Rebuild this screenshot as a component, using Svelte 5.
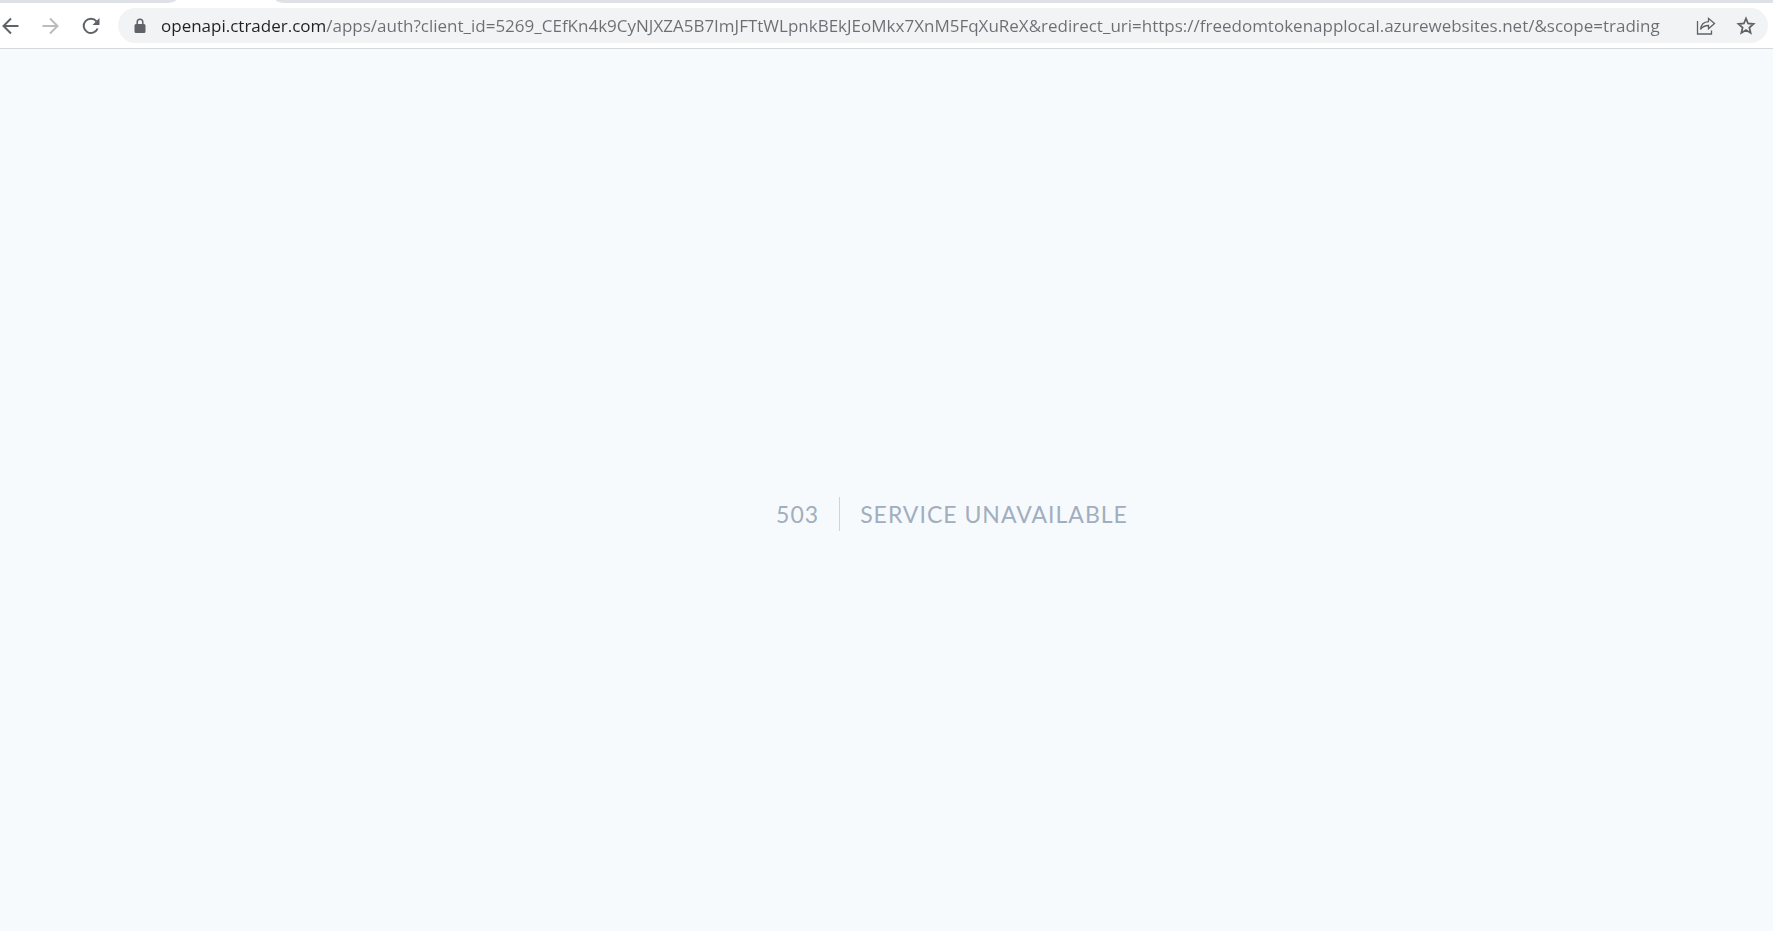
<script lang="ts">
  let url = $state(
    'openapi.ctrader.com/apps/auth?client_id=5269_CEfKn4k9CyNJXZA5B7ImJFTtWLpnkBEkJEoMkx7XnM5FqXuReX&redirect_uri=https://freedomtokenapplocal.azurewebsites.net/&scope=trading'
  );

  const error = { code: 503, message: 'Service Unavailable' };
</script>

<div class="window">
  <div class="tab-strip">
    <div class="tab before"></div>
    <div class="tab after"></div>
  </div>

  <header class="toolbar">
    <nav class="history">
      <button type="button" aria-label="Back">
        <svg viewBox="0 0 20 20"><path d="M17.500 10H2.500M10 2.500 2.500 10l7.500 7.500" /></svg>
      </button>
      <button type="button" aria-label="Forward" disabled>
        <svg viewBox="0 0 20 20"><path d="M1.500 10h15M9 2.500 16.500 10 9 17.500" /></svg>
      </button>
      <button type="button" aria-label="Reload">
        <svg viewBox="0 0 20 20">
          <path d="M16.600 12.500A7.200 7.200 0 1 1 15.500 5.300" />
          <path class="solid" d="M18.500 2v7h-7z" />
        </svg>
      </button>
    </nav>

    <form class="omnibox">
      <button type="button" class="site-info" aria-label="View site information">
        <svg viewBox="0 0 12 16">
          <path class="solid" d="M2 6h8a1.500 1.500 0 0 1 1.500 1.500v6A1.500 1.500 0 0 1 10 15H2a1.500 1.500 0 0 1-1.500-1.500v-6A1.500 1.500 0 0 1 2 6z" />
          <path class="shackle" d="M3.200 7V4a2.800 2.800 0 0 1 5.600 0v3" />
        </svg>
      </button>
      <input type="text" aria-label="Address and search bar" spellcheck="false" bind:value={url} />
      <button type="button" aria-label="Share this page">
        <svg class="share" viewBox="0 0 20 20">
          <path d="M1.500 5v13h14v-3.500" />
          <path d="M4.500 13.500C5 8.500 8 6 12.500 5.700V2.300L18.500 7.500l-6 5.300V9.500c-3.500 0-6 1-8 4z" />
        </svg>
      </button>
      <button type="button" aria-label="Bookmark this tab">
        <svg class="star" viewBox="0 0 20 20">
          <path d="M10 2.500l2.100 5 5.400.500-4.100 3.600 1.200 5.300L10 14.100l-4.600 2.800 1.200-5.300L2.500 8l5.400-.500z" />
        </svg>
      </button>
    </form>
  </header>

  <main>
    <div class="code">{error.code}</div>
    <div class="message">{error.message}</div>
  </main>
</div>

<style>
  :global(body) {
    margin: 0;
  }
  .window {
    display: flex;
    flex-direction: column;
    min-height: 100vh;
    background: #f7fafc;
  }
  .tab-strip {
    display: flex;
    justify-content: space-between;
    gap: 100px;
    height: 3px;
    background: #fff;
  }
  .tab {
    background: #dee1e6;
  }
  .before {
    flex: 0 0 176px;
    border-bottom-right-radius: 10px 3px;
  }
  .after {
    flex: 1;
    border-bottom-left-radius: 10px 3px;
  }
  .toolbar {
    display: flex;
    align-items: center;
    gap: 17px;
    padding: 5px 5px 5px 1px;
    background: #fff;
    border-bottom: 1px solid #d5d9dd;
  }
  .history {
    display: flex;
    gap: 20px;
  }
  button {
    display: flex;
    flex: none;
    padding: 0;
    border: 0;
    background: none;
    color: #5f6368;
  }
  button:disabled {
    color: #babcbe;
  }
  svg {
    width: 20px;
    height: 20px;
    fill: none;
    stroke: currentColor;
    stroke-width: 2;
  }
  .solid {
    fill: currentColor;
    stroke: none;
  }
  .omnibox {
    display: flex;
    flex: 1;
    align-items: center;
    gap: 20px;
    min-width: 0;
    height: 35px;
    padding: 0 12px 0 16px;
    border-radius: 18px;
    background: #f1f3f4;
  }
  .site-info svg {
    width: 12px;
    height: 16px;
  }
  .site-info {
    margin-right: -5px;
  }
  .shackle {
    stroke-width: 1.500;
  }
  .share {
    stroke-width: 1.300;
  }
  .star {
    stroke-width: 1.800;
  }
  /* the host part of the address is darker than its path */
  input {
    flex: 1;
    min-width: 0;
    height: 28px;
    padding: 0;
    border: 0;
    outline: 0;
    background: linear-gradient(90deg, #202124 164px, #6b6f74 164px);
    -webkit-background-clip: text;
    background-clip: text;
    color: transparent;
    font-family: 'Open Sans', sans-serif;
    font-size: 17px;
  }
  main {
    display: flex;
    flex: 1;
    align-items: center;
    justify-content: center;
    padding: 48px 0 0 131px;
    color: #a0aec0;
    font-family: Lato, sans-serif;
    font-size: 23px;
    line-height: 34px;
    letter-spacing: 1px;
    text-transform: uppercase;
  }
  .code {
    padding: 0 20px;
    border-right: 1px solid #cbd5e0;
  }
  .message {
    padding: 0 20px;
  }
</style>
